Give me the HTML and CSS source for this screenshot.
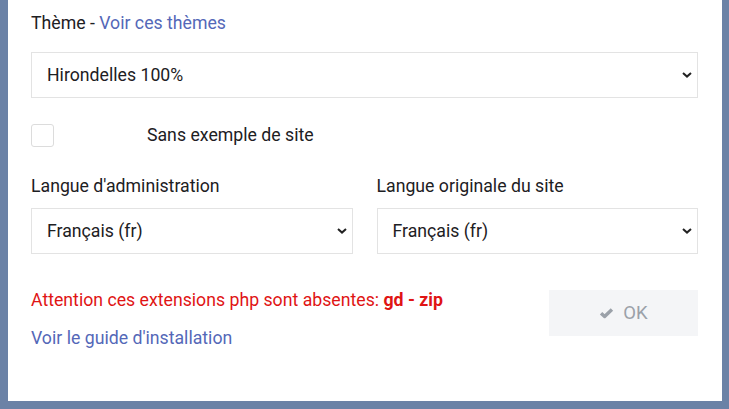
FILE: index.html
```html
<!DOCTYPE html>
<html lang="fr">
  <head>
    <meta charset="UTF-8"/>
    <title>Installation</title>
    <link rel="stylesheet" href="styles.css">
  </head>
  <body>
    <form class="panel">
        <div class="field">
            <label class="label" for="theme">Thème - <a href="#">Voir ces thèmes</a></label>
            <div class="select-wrap">
                <select id="theme" class="select">
                    <option>Hirondelles 100%</option>
                </select>
                <svg class="chevron" viewBox="0 0 10 6"><polyline points="1,1 5,4.6 9,1"/></svg>
            </div>
        </div>

        <div class="check-row">
            <input type="checkbox" id="noSample" class="check">
            <label for="noSample" class="check-label">Sans exemple de site</label>
        </div>

        <div class="cols">
            <div class="field">
                <label class="label" for="adminLang">Langue d'administration</label>
                <div class="select-wrap">
                    <select id="adminLang" class="select">
                        <option>Français (fr)</option>
                    </select>
                    <svg class="chevron" viewBox="0 0 10 6"><polyline points="1,1 5,4.6 9,1"/></svg>
                </div>
            </div>
            <div class="field">
                <label class="label" for="siteLang">Langue originale du site</label>
                <div class="select-wrap">
                    <select id="siteLang" class="select">
                        <option>Français (fr)</option>
                    </select>
                    <svg class="chevron" viewBox="0 0 10 6"><polyline points="1,1 5,4.6 9,1"/></svg>
                </div>
            </div>
        </div>

        <div class="footer">
            <div class="notes">
                <p class="warning">Attention ces extensions php sont absentes: <strong>gd - zip</strong></p>
                <a href="#" class="guide">Voir le guide d'installation</a>
            </div>
            <button type="button" class="btn-ok" disabled>
                <svg class="tick" viewBox="0 0 16 12"><polyline points="2.2,6.2 6,9.8 13.8,2.2"/></svg>
                OK
            </button>
        </div>
    </form>
  </body>
</html>
```

FILE: styles.css
```css
html, body { padding: 0; margin: 0; }
body {
    background: #6b82a6;
    font-family: Roboto, "Liberation Sans", sans-serif;
    font-size: 17.7px;
    line-height: 24px;
    color: #1d2023;
}
a { color: #5468b8; text-decoration: none; }

.panel {
    height: 401px;
    box-sizing: border-box;
    margin: 0 7px 0 8px;
    padding: 11px 24px 0 23px;
    background: #fff;
}
.label { display: block; }
.field .label { margin-bottom: 17px; }
.cols .field .label { margin-bottom: 10px; }

.select-wrap { position: relative; }
.select {
    display: block;
    width: 100%;
    height: 46px;
    margin: 0;
    padding: 0 30px 0 15px;
    border: 1px solid #e3e3e3;
    border-radius: 0;
    background: #fff;
    font: inherit;
    color: #1d2023;
    appearance: none;
    -webkit-appearance: none;
}
.chevron {
    position: absolute;
    right: 6px;
    top: 20px;
    width: 10px;
    height: 6px;
    fill: none;
    stroke: #222;
    stroke-width: 2;
    pointer-events: none;
}

.check-row {
    display: flex;
    align-items: center;
    margin-top: 25px;
}
.check {
    width: 23px;
    height: 23px;
    margin: 0;
    border: 1px solid #dcdcdc;
    border-radius: 3px;
    background: #fff;
    appearance: none;
    -webkit-appearance: none;
}
.check-label { margin-left: 93px; }

.cols {
    display: grid;
    grid-template-columns: 1fr 1fr;
    column-gap: 24px;
    margin-top: 27px;
}

.footer {
    display: flex;
    justify-content: space-between;
    align-items: flex-start;
    margin-top: 34px;
}
.warning {
    margin: 0 0 14px;
    color: #e01414;
}
.warning strong { font-weight: 700; }
.guide { display: inline-block; }

.btn-ok {
    display: flex;
    align-items: center;
    justify-content: center;
    gap: 9px;
    width: 149px;
    height: 46px;
    margin-top: 2px;
    border: 0;
    background: #f4f5f7;
    font: inherit;
    font-size: 18.5px;
    color: #9ba1a9;
}
.tick {
    width: 15px;
    height: 12px;
    fill: none;
    stroke: #9ba1a9;
    stroke-width: 3.6;
    stroke-linejoin: round;
}
```
